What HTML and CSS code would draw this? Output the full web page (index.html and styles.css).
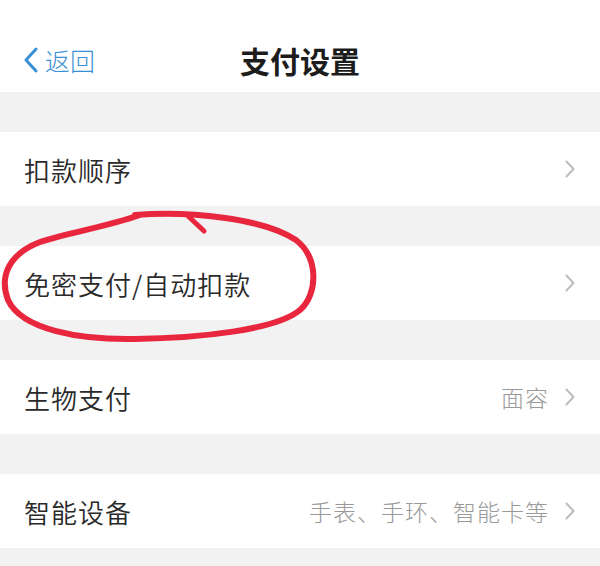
FILE: index.html
```html
<!DOCTYPE html>
<html lang="zh-CN">
<head>
    <meta charset="UTF-8">
    <meta name="viewport" content="width=device-width, initial-scale=1.0">
    <title>支付设置</title>
    <link rel="stylesheet" href="styles.css">
</head>
<body>
    <div class="page">
        <header class="nav">
            <a class="nav-back" href="#">
                <svg class="back-icon" width="16" height="26" viewBox="0 0 16 26">
                    <polyline points="13,2 3,13 13,24" fill="none" stroke="currentColor" stroke-width="3" stroke-linecap="round" stroke-linejoin="round"/>
                </svg>
                <span>返回</span>
            </a>
            <h1 class="nav-title">支付设置</h1>
        </header>

        <div class="group">
            <a class="cell" href="#">
                <span class="cell-label">扣款顺序</span>
                <span class="cell-arrow">
                    <svg width="10" height="18" viewBox="0 0 10 18"><polyline points="1.5,1.5 8.5,9 1.5,16.5" fill="none" stroke="currentColor" stroke-width="2" stroke-linecap="round" stroke-linejoin="round"/></svg>
                </span>
            </a>
        </div>

        <div class="group">
            <a class="cell" href="#">
                <span class="cell-label">免密支付/自动扣款</span>
                <span class="cell-arrow">
                    <svg width="10" height="18" viewBox="0 0 10 18"><polyline points="1.5,1.5 8.5,9 1.5,16.5" fill="none" stroke="currentColor" stroke-width="2" stroke-linecap="round" stroke-linejoin="round"/></svg>
                </span>
            </a>
        </div>

        <div class="group">
            <a class="cell" href="#">
                <span class="cell-label">生物支付</span>
                <span class="cell-value">面容</span>
                <span class="cell-arrow">
                    <svg width="10" height="18" viewBox="0 0 10 18"><polyline points="1.5,1.5 8.5,9 1.5,16.5" fill="none" stroke="currentColor" stroke-width="2" stroke-linecap="round" stroke-linejoin="round"/></svg>
                </span>
            </a>
        </div>

        <div class="group">
            <a class="cell" href="#">
                <span class="cell-label">智能设备</span>
                <span class="cell-value">手表、手环、智能卡等</span>
                <span class="cell-arrow">
                    <svg width="10" height="18" viewBox="0 0 10 18"><polyline points="1.5,1.5 8.5,9 1.5,16.5" fill="none" stroke="currentColor" stroke-width="2" stroke-linecap="round" stroke-linejoin="round"/></svg>
                </span>
            </a>
        </div>

        <!-- hand drawn red circle around the 免密支付 row -->
        <svg class="mark" width="600" height="566" viewBox="0 0 600 566">
            <path d="M135 215 C190 211 262 218 296 240 C319 258 318 294 300 310 C276 330 200 338 135 339 C80 340 22 330 8 300 C-1 276 9 254 40 242 C70 232 102 228 140 215" fill="none" stroke="#e8263d" stroke-width="6" stroke-linecap="round"/>
            <path d="M188 216 L204 231" fill="none" stroke="#e8263d" stroke-width="5" stroke-linecap="round"/>
        </svg>
    </div>
</body>
</html>
```

FILE: styles.css
```css
body {
    margin: 0;
    background-color: #f2f2f3;
    font-family: "Noto Sans CJK SC", "Noto Sans", sans-serif;
    color: #2a2a2a;
}

a {
    color: inherit;
    text-decoration: none;
}

.page {
    position: relative;
    width: 600px;
    height: 566px;
    overflow: hidden;
}

/* top bar */
.nav {
    position: relative;
    height: 64px;
    padding-top: 28px;
    background-color: #fff;
    display: flex;
    align-items: center;
    justify-content: center;
}

.nav-back {
    position: absolute;
    left: 23px;
    top: 28px;
    height: 64px;
    display: flex;
    align-items: center;
    gap: 6px;
    color: #3a90d4;
    font-size: 25px;
    font-weight: 300;
}

.back-icon {
    display: block;
}

.nav-title {
    margin: 0;
    font-size: 30px;
    font-weight: bold;
    color: #1c1c1c;
}

/* list */
.group {
    margin-top: 40px;
    background-color: #fff;
}

.cell {
    height: 74px;
    padding: 0 25px 0 24px;
    display: flex;
    align-items: center;
}

.cell-label {
    flex: 1;
    font-size: 26px;
    font-weight: 350;
    letter-spacing: 1px;
    color: #2a2a2a;
}

.cell-value {
    font-size: 23px;
    font-weight: 300;
    letter-spacing: 1px;
    color: #999;
    margin-right: 16px;
}

.cell-arrow {
    color: #bcbcbc;
    display: flex;
}

.mark {
    position: absolute;
    left: 0;
    top: 0;
    pointer-events: none;
}
```
